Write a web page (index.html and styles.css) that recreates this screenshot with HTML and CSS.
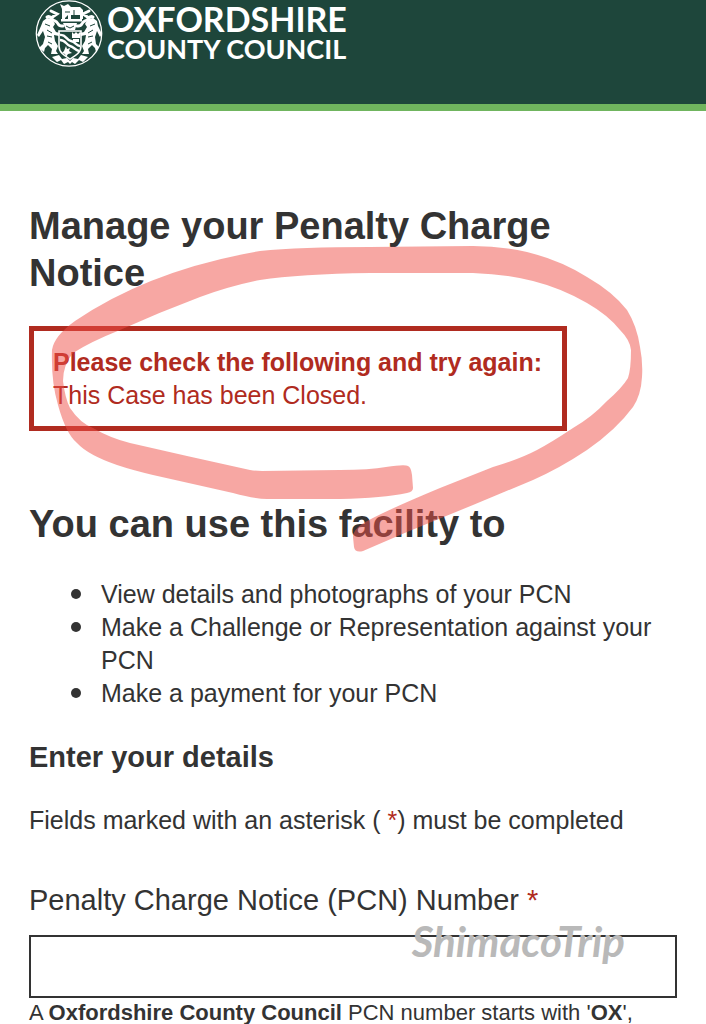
FILE: index.html
```html
<!DOCTYPE html>
<html lang="en">
<head>
    <meta charset="UTF-8">
    <meta name="viewport" content="width=device-width, initial-scale=1.0">
    <title>Manage your Penalty Charge Notice</title>
    <link rel="stylesheet" href="styles.css">
</head>
<body>
    <header class="site-header">
        <a class="brand" href="#">
            <svg class="crest" viewBox="0 0 68 68" aria-hidden="true">
                <circle cx="34" cy="33.5" r="32.7" fill="none" stroke="#fff" stroke-width="1.3"/>
                <!-- ox on the helm -->
                <path fill="#fff" d="M27 9l-2-5 4 2 4-2 3 3h9l3 3v9h-3v-4h-9v4h-3v-4l-3 3v2h-3zM26 19h21v2.5H26z"/>
                <path fill="#fff" d="M28 23h14l-2 7h-9z"/>
                <!-- mantling -->
                <path fill="none" stroke="#fff" stroke-width="3" stroke-linecap="round" d="M28 26c-6 1-4-4-8-5s-4-6-8-4M42 26c6 1 4-4 8-5s4-6 8-4M16 11l6 3-6 4M54 11l-6 3 6 4"/>
                <!-- shield -->
                <path fill="none" stroke="#fff" stroke-width="1.6" d="M24 31h22v15c0 7-6 10-11 13-5-3-11-6-11-13z"/>
                <path fill="none" stroke="#fff" stroke-width="2.4" d="M25 35c6-1 6 5 11 6s5 5 9 5M25 40c6 0 6 5 10 6s5 4 9 5"/>
                <path fill="#fff" d="M37 32l2 2 2-2 2 2 2-2v6h-8zM38 39h6v3h-6zM31 46l1 3 3-1-1 3 3 2-4 1-2 3-1-3-3-1 2-2z"/>
                <!-- lions -->
                <path fill="#fff" d="M8 21l4-3 5 1 3 5-2 3 3 5 4 1-1 3-5-1 1 6 3 5-2 5 2 3h-7l1-5-4-4-3 3-1 4-5-4 4-4 2-7-2-6-4 6-2-2 4-9z"/>
                <path fill="#fff" d="M62 21l-4-3-5 1-3 5 2 3-3 5-4 1 1 3 5-1-1 6-3 5 2 5-2 3h7l-1-5 4-4 3 3 1 4 3-5-3-3-1-7 2-6 3 6 2-3-4-8z"/>
                <path fill="none" stroke="#1e463b" stroke-width="1" d="M10 24l5 2M12 30l5 3M12 36l5 1M13 42l4 2M60 24l-5 2M58 30l-5 3M58 36l-5 1M57 42l-4 2M30 12h5M39 10v6M31 26l4 2 4-2"/>
                <!-- scroll -->
                <path fill="#fff" d="M17 57l7-2 3 4 5-1 3 3 3-3 5 1 3-4 7 2-5 5-4-2-4 4-3-2-2 2-2-2-4 2-3-4-4 2z"/>
            </svg>
            <span class="brand-name">
                <span class="brand-top">OXFORDSHIRE</span>
                <span class="brand-bottom">COUNTY COUNCIL</span>
            </span>
        </a>
    </header>

    <main class="content">
        <h1>Manage your Penalty Charge Notice</h1>

        <div class="error-summary" role="alert">
            <strong>Please check the following and try again:</strong>
            <p>This Case has been Closed.</p>
        </div>

        <h2>You can use this facility to</h2>
        <ul class="facilities">
            <li>View details and photographs of your PCN</li>
            <li>Make a Challenge or Representation against your PCN</li>
            <li>Make a payment for your PCN</li>
        </ul>

        <form>
            <h3>Enter your details</h3>
            <p class="form-note">Fields marked with an asterisk ( <span class="required">*</span>) must be completed</p>

            <label for="pcn">Penalty Charge Notice (PCN) Number <span class="required">*</span></label>
            <div class="field">
                <input type="text" id="pcn" aria-describedby="pcn-hint" required>
                <span class="watermark">ShimacoTrip</span>
            </div>
            <p class="hint" id="pcn-hint">A <b>Oxfordshire County Council</b> PCN number starts with '<b>OX</b>',</p>
        </form>
    </main>

    <!-- Marker stroke round the error message -->
    <svg class="marker" width="706" height="600" viewBox="0 0 706 600" aria-hidden="true">
        <path d="M408 466Q411 467 412 475L413 488Q413 492 407 493Q383 498 340 499H267Q255 499 233 493L153 475Q132 470 117 465Q88 455 77 443Q66 434 58 405Q51 382 52 350Q54 336 75 321Q150 270 260 251Q300 247 370 247L473 246Q500 246 527 252Q560 260 587 277Q613 292 627 310Q637 326 640 347Q643 362 642 377Q641 395 633 407Q616 430 587 450Q560 468 533 480L473 505L407 532L363 551Q355 553 354 547L353 537Q353 530 362 524Q380 513 440 488L493 467Q520 459 537 450Q552 442 573 428Q592 417 607 401Q622 388 628 378Q631 369 631 350Q630 340 620 330Q608 315 587 303Q561 288 533 281Q505 274 473 273H370Q300 274 260 280Q230 286 200 297Q160 312 120 330Q90 342 73 353Q63 365 63 381Q65 398 70 408Q80 423 93 428Q110 438 130 443L187 456L250 470Q256 471 262 471L340 470Q370 470 386 467Q405 464 408 466Z"/>
    </svg>
</body>
</html>
```

FILE: styles.css
```css
:root {
    --header-bg: #1e463b;
    --header-line: #70b55e;
    --text: #333;
    --error: #b02b20;
}

* {
    margin: 0;
    padding: 0;
    box-sizing: border-box;
}

body {
    position: relative;
    min-height: 100vh;
    overflow-x: hidden;
    background: #fff;
    color: var(--text);
    font-family: "Liberation Sans", Arial, sans-serif;
    font-size: 25px;
    line-height: 33px;
}

/* Header */
.site-header {
    padding: 0 35px 36px;
    background: var(--header-bg);
    border-bottom: 7px solid var(--header-line);
}

.brand {
    display: flex;
    width: fit-content;
    gap: 4px;
    color: #fff;
    text-decoration: none;
}

.crest {
    width: 68px;
    height: 68px;
}

.brand-name {
    display: flex;
    flex-direction: column;
    padding-top: 3px;
    font-family: Lato, sans-serif;
    font-weight: 700;
}

.brand-top {
    font-size: 34px;
    line-height: 32px;
}

.brand-bottom {
    font-size: 27px;
    line-height: 28px;
}

/* Content */
.content {
    padding: 92px 29px 0;
}

h1,
h2 {
    font-size: 38px;
    line-height: 47px;
}

.error-summary {
    width: fit-content;
    margin: 29px 0 70px;
    padding: 15px 20px 14px 19px;
    border: 5px solid var(--error);
    color: var(--error);
}

.facilities {
    margin: 30px 0 31px;
    padding-left: 72px;
    list-style: none;
}

.facilities li::before {
    content: '';
    display: inline-block;
    width: 10px;
    height: 10px;
    margin: 0 20px 0 -30px;
    border-radius: 50%;
    background: var(--text);
    vertical-align: 4px;
}

h3 {
    font-size: 29px;
    line-height: 33px;
}

.form-note {
    margin: 30px 0 44px;
}

.required {
    color: var(--error);
}

label {
    display: block;
    margin-bottom: 16px;
    font-size: 29px;
    line-height: 38px;
}

.field {
    position: relative;
}

input {
    display: block;
    width: 100%;
    height: 63px;
    padding: 0 16px;
    border: 2px solid var(--text);
    background: #fff;
    color: var(--text);
    font: inherit;
}

.hint {
    font-size: 22px;
    line-height: 30px;
}

/* Lies over the field */
.watermark {
    position: absolute;
    top: -18px;
    right: 52px;
    color: #b9b9b9;
    font-family: "Brush Script MT", Lato, cursive;
    font-size: 42px;
    font-style: italic;
    font-weight: 700;
    line-height: 48px;
    pointer-events: none;
}

.marker {
    position: absolute;
    top: 0;
    left: 0;
    fill: #f05048;
    fill-opacity: 0.5;
    pointer-events: none;
}
```
